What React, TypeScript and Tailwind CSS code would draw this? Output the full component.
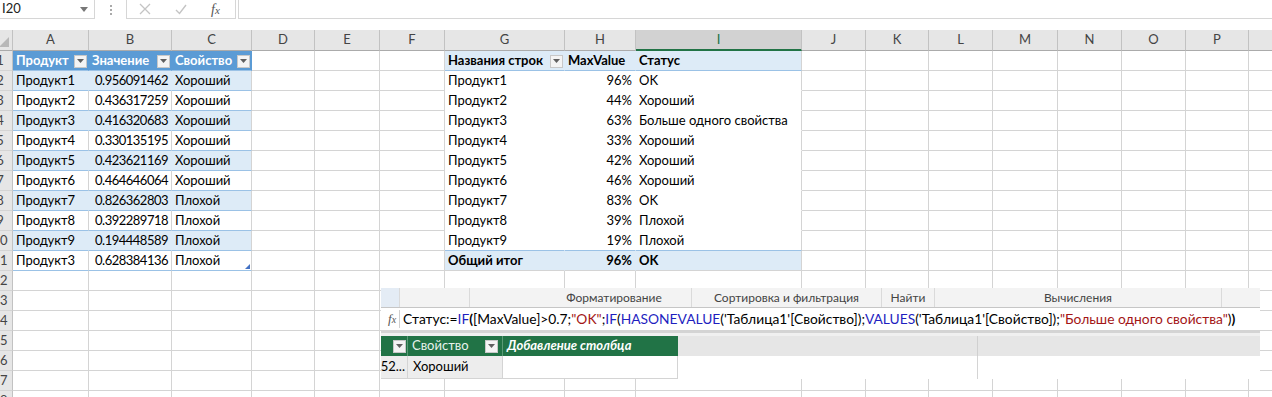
import React from "react";

const COLS = ["A", "B", "C", "D", "E", "F", "G", "H", "I", "J", "K", "L", "M", "N", "O", "P", "Q"];

const TABLE: [string, string, string][] = [
  ["Продукт1", "0.956091462", "Хороший"],
  ["Продукт2", "0.436317259", "Хороший"],
  ["Продукт3", "0.416320683", "Хороший"],
  ["Продукт4", "0.330135195", "Хороший"],
  ["Продукт5", "0.423621169", "Хороший"],
  ["Продукт6", "0.464646064", "Хороший"],
  ["Продукт7", "0.826362803", "Плохой"],
  ["Продукт8", "0.392289718", "Плохой"],
  ["Продукт9", "0.194448589", "Плохой"],
  ["Продукт3", "0.628384136", "Плохой"],
];

const PIVOT: [string, string, string][] = [
  ["Продукт1", "96%", "OK"],
  ["Продукт2", "44%", "Хороший"],
  ["Продукт3", "63%", "Больше одного свойства"],
  ["Продукт4", "33%", "Хороший"],
  ["Продукт5", "42%", "Хороший"],
  ["Продукт6", "46%", "Хороший"],
  ["Продукт7", "83%", "OK"],
  ["Продукт8", "39%", "Плохой"],
  ["Продукт9", "19%", "Плохой"],
];

const BASE = "relative h-[20px] border-r border-b flex items-center overflow-hidden whitespace-nowrap pt-[1px]";
const DEF = "bg-white border-r-[#d4d4d4] border-b-[#d4d4d4]";

function Drop({ className = "" }: { className?: string }) {
  return (
    <span className={"ml-auto mr-[1px] flex h-[13px] w-[13px] shrink-0 items-center justify-center border border-[#c8c8c8] bg-[#f4f4f4] " + className}>
      <svg width="7" height="4" viewBox="0 0 7 4">
        <path d="M0 0h7L3.5 4z" fill="#606060" />
      </svg>
    </span>
  );
}

type Spec = {
  text?: string;
  cls: string;
  align?: "l" | "r";
  drop?: boolean;
  handle?: boolean;
  num?: boolean;
};

function cellSpec(r: number, c: number): Spec {
  if (c >= 1 && c <= 3 && r >= 1 && r <= 11) {
    if (r === 1) {
      return {
        text: ["Продукт", "Значение", "Свойство"][c - 1],
        cls: "bg-[#5b9bd5] border-r-[#5b9bd5] border-b-[#9bc2e6] text-white font-bold",
        drop: true,
      };
    }
    const row = TABLE[r - 2];
    const band = r % 2 === 0;
    const bg = band ? "bg-[#ddebf7]" : "bg-white";
    const br = c === 3 ? "border-r-[#d4d4d4]" : band ? "border-r-[#ddebf7]" : "border-r-[#d4d4d4]";
    return {
      text: row[c - 1],
      cls: `${bg} ${br} border-b-[#9bc2e6]`,
      align: c === 2 ? "r" : "l",
      handle: r === 11 && c === 3,
      num: c === 2,
    };
  }
  if (c >= 7 && c <= 9 && r >= 1 && r <= 11) {
    const isI = c === 9;
    if (r === 1) {
      return {
        text: ["Названия строк", "MaxValue", "Статус"][c - 7],
        cls: `bg-[#ddebf7] ${isI ? "border-r-[#d4d4d4]" : "border-r-[#ddebf7]"} border-b-[#9bc2e6] font-bold`,
        drop: c === 7,
      };
    }
    if (r === 11) {
      return {
        text: ["Общий итог", "96%", "OK"][c - 7],
        cls: `bg-[#ddebf7] ${isI ? "border-r-[#d4d4d4]" : "border-r-[#ddebf7]"} border-b-[#d4d4d4] font-bold`,
        align: c === 8 ? "r" : "l",
      };
    }
    const row = PIVOT[r - 2];
    return {
      text: row[c - 7],
      cls: `bg-white ${isI ? "border-r-[#d4d4d4]" : "border-r-white"} ${r === 10 ? "border-b-[#9bc2e6]" : "border-b-white"}`,
      align: c === 8 ? "r" : "l",
    };
  }
  return { cls: DEF };
}

function Cell({ spec }: { spec: Spec }) {
  return (
    <div className={`${BASE} ${spec.cls} ${spec.align === "r" ? "justify-end pr-[3px]" : "pl-[3px]"}`}>
      {spec.text && <span className={spec.num ? "tracking-[-0.5px]" : ""}>{spec.text}</span>}
      {spec.drop && <Drop />}
      {spec.handle && (
        <svg className="absolute right-[1px] bottom-[1px]" width="5" height="5" viewBox="0 0 5 5">
          <path d="M5 0V5H0z" fill="#4472c4" />
        </svg>
      )}
    </div>
  );
}

function RowHeader({ n }: { n: number }) {
  return (
    <div className="h-[20px] overflow-hidden border-r border-b border-r-[#c2c2c2] border-b-[#d4d4d4] bg-[#e6e6e6] pt-[1px]">
      <div className="-ml-[13px] flex h-full w-[26px] items-center justify-center text-[#444]">{n}</div>
    </div>
  );
}

function Grid() {
  const rows = Array.from({ length: 18 }, (_, i) => i + 1);
  return (
    <div className="grid w-[1313px] grid-cols-[13px_76px_83px_80px_63px_65px_65px_120px_71px_166px_64px_63px_64px_65px_64px_64px_63px_64px]">
      <div className="relative h-[21px] border-r border-b border-r-[#c2c2c2] border-b-[#ababab] bg-[#e6e6e6]">
        <svg className="absolute right-[3px] bottom-[3px]" width="10" height="10" viewBox="0 0 10 10">
          <path d="M10 0V10H0z" fill="#b8b8b8" />
        </svg>
      </div>
      {COLS.map((l) =>
        l === "I" ? (
          <div
            key={l}
            className="flex h-[21px] items-center justify-center border-r border-b-2 border-r-[#c2c2c2] border-b-[#217346] bg-[#d2d2d2] text-[#217346]"
          >
            {l}
          </div>
        ) : (
          <div
            key={l}
            className="flex h-[21px] items-center justify-center border-r border-b border-r-[#c2c2c2] border-b-[#ababab] bg-[#e6e6e6] text-[#444]"
          >
            {l}
          </div>
        )
      )}
      {rows.map((r) => (
        <React.Fragment key={r}>
          <RowHeader n={r} />
          {COLS.map((_, i) => (
            <Cell key={i} spec={cellSpec(r, i + 1)} />
          ))}
        </React.Fragment>
      ))}
    </div>
  );
}

function TopBar() {
  return (
    <div className="flex h-[30px] items-start bg-white">
      <div className="flex h-[19px] w-[95px] items-center border-r border-b border-[#d6d6d6] bg-white pl-[2px] text-[#222]">
        <span>I20</span>
        <svg className="ml-auto mr-[6px]" width="8" height="5" viewBox="0 0 8 5">
          <path d="M0 0h8L4 5z" fill="#777" />
        </svg>
      </div>
      <div className="flex h-[19px] w-[31px] flex-col items-center justify-center gap-[2px]">
        <span className="h-[2px] w-[2px] bg-[#aaa]" />
        <span className="h-[2px] w-[2px] bg-[#aaa]" />
        <span className="h-[2px] w-[2px] bg-[#aaa]" />
      </div>
      <div className="flex h-[19px] w-[110px] items-center border-x border-b border-[#d6d6d6] bg-white">
        <svg className="ml-[12px]" width="12" height="12" viewBox="0 0 12 12">
          <path d="M1 1L11 11M11 1L1 11" stroke="#c4c4c4" strokeWidth="1.3" />
        </svg>
        <svg className="ml-[24px]" width="12" height="11" viewBox="0 0 12 11">
          <path d="M1 6L4.5 9.5L11 1" stroke="#c4c4c4" strokeWidth="1.4" fill="none" />
        </svg>
        <span className="ml-[24px] font-['Liberation_Serif',serif] text-[14px] italic text-[#555]">
          f<span className="text-[11px]">x</span>
        </span>
      </div>
      <div className="ml-[2px] h-[19px] flex-1 border-l border-b border-[#d6d6d6] bg-white" />
    </div>
  );
}

function PowerPivot() {
  const B = "text-[#1f1fbf]";
  const S = "text-[#a31515]";
  return (
    <div className="absolute left-[381px] top-[288px] flex w-[879px] flex-col bg-white font-['Lato',sans-serif]">
      <div className="flex h-[20px] border-b border-[#c6c6c6] bg-[#f3f3f3] text-[12px] text-[#444]">
        <div className="w-[19px] border-r border-[#dadada] bg-[#e4ecf5]" />
        <div className="w-[70px] border-r border-[#dadada]" />
        <div className="w-[67px]" />
        <div className="flex w-[155px] items-center justify-center border-r border-[#dadada]">Форматирование</div>
        <div className="flex w-[190px] items-center justify-center border-r border-[#dadada]">Сортировка и фильтрация</div>
        <div className="flex w-[53px] items-center justify-center border-r border-[#dadada]">Найти</div>
        <div className="flex w-[287px] items-center justify-center border-r border-[#dadada]">Вычисления</div>
        <div className="flex-1" />
      </div>
      <div className="flex h-[25px] items-center border-b-[3px] border-[#d4d4d4] bg-white text-[13.8px] text-black">
        <span className="ml-[7px] font-['Liberation_Serif',serif] text-[13px] italic text-[#555]">
          f<span className="text-[10px]">x</span>
        </span>
        <span className="ml-[3px] h-[18px] w-px bg-[#d0d0d0]" />
        <span className="ml-[3px] whitespace-nowrap">
          Статус:=<span className={B}>IF</span>
          <b>(</b>[MaxValue]&gt;0.7;<span className={S}>"OK"</span>;<span className={B}>IF</span>(
          <span className={B}>HASONEVALUE</span>('Таблица1'[Свойство]);<span className={B}>VALUES</span>
          ('Таблица1'[Свойство]);<span className={S}>"Больше одного свойства"</span>)<b>)</b>
        </span>
      </div>
      <div className="flex h-[23px] bg-[#f0f0f0] pt-[3px]">
        <div className="flex w-[297px] bg-[#217346] text-[13px] text-white">
          <div className="flex w-[27px] items-center border-r border-[#5a9a76]">
            <Drop />
          </div>
          <div className="flex w-[95px] items-center border-r border-[#5a9a76] pl-[4px] text-[#e8f2ec]">
            <span>Свойство</span>
            <Drop className="mr-[4px]" />
          </div>
          <div className="flex flex-1 items-center pl-[4px] font-bold italic">Добавление столбца</div>
        </div>
        <div className="w-[300px] border-r border-[#d0d0d0] bg-[#e6e6e6]" />
        <div className="flex-1 bg-[#e6e6e6]" />
      </div>
      <div className="flex h-[23px] text-[13px] text-black">
        <div className="flex w-[27px] items-center justify-end overflow-hidden border-r border-b border-[#d4d4d4] bg-[#ededed] pr-[2px]">
          52...
        </div>
        <div className="flex w-[95px] items-center border-r border-b border-[#d4d4d4] bg-[#ededed] pl-[5px]">
          Хороший
        </div>
        <div className="w-[175px] border-r border-b border-[#d4d4d4]" />
        <div className="w-[300px] border-r border-[#d4d4d4]" />
        <div className="flex-1" />
      </div>
    </div>
  );
}

export default function App() {
  return (
    <div className="relative h-[397px] w-[1272px] overflow-hidden bg-white font-['Lato',sans-serif] text-[13px] text-black">
      <TopBar />
      <Grid />
      <PowerPivot />
    </div>
  );
}
